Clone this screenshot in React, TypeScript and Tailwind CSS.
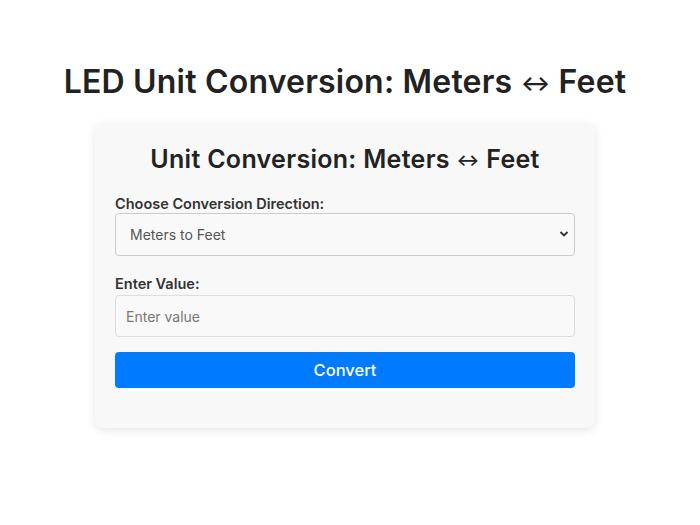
export default function App() {
  return (
    <div className="min-h-[525px] bg-white flex flex-col items-center pt-[60px] pr-[10px] text-[#222]" style={{ fontFamily: 'Inter, "Open Sans", sans-serif' }}>
      <h1 className="text-[32px] leading-[44px] font-semibold tracking-[0.2px] text-[#222]">
        LED Unit Conversion: Meters <span className="text-[22px] align-[2px]">↔</span> Feet
      </h1>
      <div className="mt-[18px] w-[500px] bg-[#f8f8f8] rounded-lg shadow-[0_2px_10px_rgba(0,0,0,0.1)] px-5 pt-[20px] pb-[40px]">
        <h2 className="text-center text-[25px] leading-[32px] font-semibold tracking-[0.3px] text-[#222]">
          Unit Conversion: Meters <span className="text-[17px] align-[2px]">↔</span> Feet
        </h2>
        <label className="block mt-[19px] text-[14.5px] leading-[18px] font-semibold text-[#333]">Choose Conversion Direction:</label>
        <div className="relative mt-0">
          <select className="w-full h-[43px] appearance-none rounded border border-[#ccc] bg-[#f9f9f9] pl-[14px] text-[14px] text-[#555] outline-none">
            <option>Meters to Feet</option>
            <option>Feet to Meters</option>
          </select>
          <svg className="absolute right-[6px] top-[17px] pointer-events-none" width="10" height="8" viewBox="0 0 10 8" fill="none">
            <path d="M1.5 2l3.5 3.5L8.5 2" stroke="#333" strokeWidth="1.8" />
          </svg>
        </div>
        <label className="block mt-[19px] text-[14.5px] leading-[18px] font-semibold text-[#333]">Enter Value:</label>
        <input
          placeholder="Enter value"
          className="mt-[2px] w-full h-[42px] rounded-sm border border-[#ddd] bg-[#f9f9f9] px-[10px] text-[14px] text-[#333] placeholder:text-[#777] outline-none"
        />
        <button className="mt-[15px] w-full h-[36px] rounded bg-[#007bff] text-white text-[16.5px] font-medium">Convert</button>
      </div>
    </div>
  );
}
